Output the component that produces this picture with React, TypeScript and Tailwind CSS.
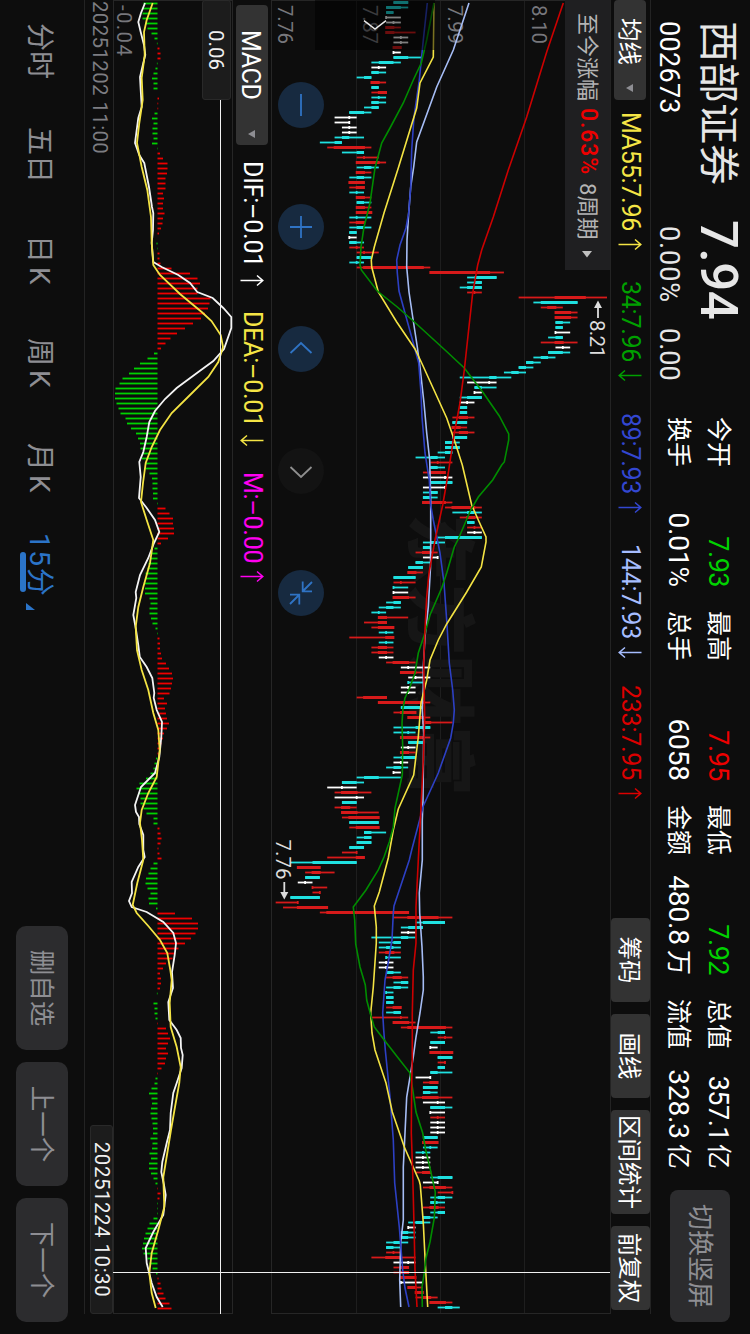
import type { ReactNode } from "react";

type Point = [time: number, level: number];

const STEP = 5;
const MAIN_TOP = 610;
const MACD_TOP = 232;
const MACD_ZERO = 157.5;

// colour, then low, body low, body high, high, in cents above 7.76
const CANDLES = `
c16,16,18,18 c15,15,17,18 c15,15,16,16 w15,15,15,17 w15,16,16,17 r15,15,16,17 r15,15,16,19 w16,17,17,18 w16,17,17,18 r16,16,17,17
w16,16,16,17 c16,16,18,20 c13,14,16,17 w13,14,14,15 c13,13,14,15 c11,12,13,13 r13,13,14,15 c13,13,14,14 r13,14,15,15 c13,14,14,15
c13,13,14,15 c12,13,14,14 c10,10,12,13 w8,10,10,11 w8,10,10,10 w9,10,10,11 w9,10,10,11 c8,9,10,12 c6,8,9,9 r7,8,12,13
c9,11,12,12 r11,12,12,14 r11,11,14,15 c11,12,13,14 r11,11,12,13 c10,11,12,13 r10,10,12,12 r10,11,12,12 c10,11,11,12 r11,11,12,13
c11,11,12,13 r11,11,12,13 r11,11,13,13 c10,11,11,13 r10,11,12,12 c10,11,12,13 c10,10,11,11 w10,10,10,11 c10,10,11,12 r10,11,11,12
r11,12,12,14 c11,11,13,13 c10,11,11,12 r11,12,20,21 r21,21,29,31 c26,27,30,30 c26,27,28,28 c25,26,28,28 r26,27,27,28 r33,38,42,45
c35,36,41,41 r36,37,38,39 r38,38,40,41 r38,38,40,41 c38,38,39,40 c38,38,39,39 w38,38,38,40 c37,38,39,39 r36,38,39,41 w38,39,39,40
c37,37,39,40 c35,36,37,38 c34,34,35,36 c33,33,34,35 c31,32,33,34 c25,29,30,32 w26,29,29,30 c27,27,28,30 w27,27,27,28 c25,26,28,28
w25,26,26,27 c25,25,26,26 c25,25,26,26 r24,25,26,27 c24,24,26,26 r24,24,25,26 r24,25,26,27 c24,24,26,26 c23,23,24,25 c23,23,25,25
c22,23,24,24 c19,21,22,23 r21,22,22,24 c21,21,22,23 r20,21,23,23 w20,23,23,24 c21,21,24,24 w20,23,23,23 c20,21,22,22 c20,20,21,22
r20,20,23,24 r23,24,27,28 c24,26,27,28 r25,26,27,28 c26,26,27,27 r26,27,27,28 w26,27,27,28 c22,23,28,28 c20,21,22,23 c20,20,21,21
r19,20,21,22 w20,22,22,22 c19,19,20,21 c18,18,20,20 r18,18,19,20 c16,16,19,19 r16,17,17,19 c16,16,16,18 w16,16,16,18 r16,16,18,19
c15,16,17,17 c14,15,16,17 c13,14,14,15 r14,14,15,18 r12,14,15,15 r13,14,16,16 c14,15,15,16 r10,15,16,16 c14,15,15,16 r13,14,15,16
r13,14,15,16 w14,15,15,16 r15,16,18,19 w17,18,18,21 r17,17,19,20 w18,19,19,21 c18,18,18,20 w17,18,18,19 w17,18,18,19 r11,12,15,15
r14,14,20,21 c17,17,20,20 r16,17,19,19 r18,18,20,21 r20,20,21,24 c16,19,21,21 c16,18,18,19 r17,17,20,21 c18,18,20,20 w17,18,18,19
r17,17,18,19 c16,17,19,19 w16,17,17,18 c15,16,17,18 w16,16,16,17 c11,12,14,17 c9,9,11,12 w7,9,9,11 r8,9,11,13 w8,11,11,12
c9,9,11,11 r8,9,10,11 r9,9,11,14 r9,10,14,14 c10,10,14,14 r10,11,14,14 c12,12,13,15 c11,12,13,13 c11,11,13,13 c10,10,12,12
r9,11,11,11 r7,11,12,12 c2,5,11,11 r3,3,6,6 r4,5,6,8 c4,4,6,6 w3,4,4,5 r5,5,5,7 r5,6,6,6 c2,2,6,6
r0,3,3,3 r1,3,7,7 r6,7,18,18 r16,18,22,24 c19,20,23,23 c17,18,20,20 w17,18,18,19 c13,17,18,19 c14,16,17,17 c14,15,16,17
r14,15,16,17 c15,15,15,17 w14,15,15,16 w14,15,15,16 c15,15,16,17 r15,16,17,18 c16,17,18,18 c15,16,17,18 c15,15,15,16 c15,15,16,16
c15,15,16,16 r15,16,17,17 c15,16,17,17 r13,17,17,18 r16,16,18,19 r17,18,23,24 c21,22,23,23 r22,23,23,24 c21,21,23,23 w21,21,21,22
r21,21,24,24 c22,22,24,24 r22,23,23,23 c22,22,23,23 c21,21,22,24 w19,21,21,21 r20,21,22,22 c20,20,22,22 c20,20,21,22 r19,20,22,24
w20,22,22,23 c21,21,23,24 w21,21,21,23 r21,22,22,23 w21,22,22,23 w21,22,22,23 w21,22,22,23 c20,20,22,22 r20,20,22,22 c20,21,21,22
c19,20,20,21 w19,20,20,21 w19,20,20,21 w19,20,20,21 r19,20,21,21 c21,22,24,24 w20,22,22,22 r20,21,23,24 r22,24,24,24 c21,22,23,24
c21,21,22,23 r20,21,22,23 c21,22,23,23 c20,20,21,22 c18,19,20,21 w18,18,18,19 c17,17,18,19 c17,17,18,19 c15,16,17,18 c15,15,16,17
r15,16,16,17 r13,15,17,19 w16,18,18,19 r16,17,18,18 r16,17,18,18 r17,17,19,19 w17,17,17,20 r18,18,19,20 r19,19,20,20 r19,20,21,22
r21,21,23,24 c22,23,24,25`
  .trim()
  .split(/\s+/)
  .map((token) => ({
    kind: token[0],
    prices: token.slice(1).split(",").map(Number),
  }));

const CANDLE_COLORS: Record<string, string> = {
  r: "#d71a1a",
  c: "#1fe0e0",
  w: "#ffffff",
};

const HISTOGRAM = [
  -14, -15, -15, -15, -12, -10, -6, -3, -0.6, 2, 3, 3, -0.6, -2, -4, -5.5, -4, -4, 0, 1.5, 0.7, 0.7, -3, -5.5, -4, -5, -5, -4, -5.5, -0.4,
  2.5, 5.5, 10, 10, 9.5, 8, 8, 8, 5.5, 6.5, 5.5, 5.5, 7, 5.5, 5, 3.5, 1.5, 0, -1, -0.4, 2, 2, 3, 14, 32.5, 40, 42.5, 40, 40, 53,
  52, 50.5, 47.5, 43.5, 35.5, 27.5, 19.5, 13, 8, 3.5, -3.5, -10, -17.5, -23.5, -28.5, -35, -38, -42, -42.5, -42.5, -41, -39, -37, -32, -30.5, -26.5, -21.5, -19.5, -17.5, -17,
  -15.5, -15.5, -12.5, -12, -8, -5.5, -5, -5, -4.5, -4.5, -0.5, 8, 12, 15.5, 15.5, 16.5, 16.5, 10.5, 3.5, -3, -5.5, -7, -9, -10, -12, -12, -12.5, -12.5, -12.5, -8,
  -7, -8, -8, -6.5, -5, -2, -0.5, 2, 2.5, 2.5, 3.5, 4.5, 8.5, 11.5, 14.5, 15.5, 14.5, 13.5, 12, 6.5, 9.5, 7.5, 8.5, 9.5, 11.5, 9.5, 6.5, 5.5, 4, 2.5,
  1, -1.5, -3, -4, -7, -11.5, -18, -21, -19, -17, -17, -14, -11, -4, -4, 2, 3, 4, 3, 1, 2, 4, -4, -7, -9, -11.5, -12, -10, -7, -9,
  -8.5, -1.5, 17.5, 34.5, 40.5, 40.5, 38, 33.5, 27.5, 21, 17, 15, 8.5, 5.5, 2.5, 3.5, 3.5, 2.5, -0.6, 0, -4, -3, -3, -2, 0.5, 8.5, 10.5, 12.5, 10.5, 8.5,
  10.5, 8.5, 7.5, 4, 0.5, -2, -3, -6, -8.5, -6, -5.5, -6.5, -7, -6, -5, -4.5, -4.5, -7, -5, -5.5, -8, -6.5, -8.5, -8.5, -6.5, -4, -2, 0.5, 3, 2,
  -0.5, -0.5, -0.5, -4, -8, -10, -12, -13.5, -14.5, -15.5, -14, -10, -8, -5, -1.5, 1, 3, 4, 6, 8, 12, 14,
];

const AVERAGES: { color: string; points: Point[] }[] = [
  {
    color: "#a6bdf5",
    points: [[3, 469], [50, 453.3], [87, 436.7], [142, 416.7], [167, 413.7], [187, 410.7], [213, 408.7], [240, 407], [267, 406.7], [292, 409], [317, 412.7], [347, 417.3], [367, 420], [403, 424], [433, 426.7], [460, 429.7], [500, 430.7], [540, 430.7], [567, 430.5], [607, 428.3], [637, 425], [667, 423.3], [687, 423.3], [710, 422.3], [733, 423.7], [800, 423], [820, 422.3], [860, 422.3], [893, 419.3], [913, 419.7], [947, 422], [977, 423.3], [990, 423.3], [1013, 420], [1037, 416], [1057, 413.3], [1097, 406.7], [1133, 405], [1167, 403.3], [1220, 403.3], [1243, 400.7], [1280, 399.7], [1307, 400.7]],
  },
  {
    color: "#2d40c4",
    points: [[3, 427.3], [40, 423.3], [80, 419.3], [117, 414], [150, 411.7], [187, 410.7], [213, 408.7], [228, 406], [245, 400], [260, 396.7], [273, 397.3], [291, 399], [313, 405], [343, 413.3], [363, 418.7], [393, 421], [417, 422], [453, 425], [480, 429.3], [505, 430.7], [520, 433.3], [553, 440], [583, 444], [620, 446.7], [663, 449.3], [690, 452.7], [710, 454.3], [723, 453.3], [738, 450.7], [773, 438.3], [806, 423.3], [850, 411.7], [860, 409.3], [906, 394], [913, 393.3], [940, 392], [962, 388.3], [980, 385], [1013, 382.7], [1030, 383.7], [1050, 385.3], [1097, 390], [1140, 393.3], [1183, 394.7], [1227, 399.3], [1270, 402.7], [1288, 405], [1307, 409]],
  },
  {
    color: "#f3e343",
    points: [[3, 434], [57, 433.3], [83, 420], [108, 416.7], [168, 398.3], [213, 384], [247, 374.3], [260, 371.3], [267, 371.7], [292, 378.3], [322, 396.7], [349, 415], [363, 421.7], [418, 446.7], [440, 454.3], [465, 462.3], [505, 471.7], [520, 478.3], [537, 486], [542, 486], [567, 481.3], [592, 466.7], [624, 446.7], [640, 438.3], [660, 430], [680, 426.7], [703, 421], [737, 418.3], [775, 413.7], [809, 398.3], [830, 393.3], [858, 388.3], [892, 379.3], [906, 374.3], [927, 376.3], [943, 376.3], [987, 373.3], [1013, 370.7], [1033, 372], [1050, 375], [1083, 386], [1112, 392.3], [1147, 404.3], [1181, 419.3], [1185, 420.3], [1223, 423.3], [1257, 425], [1307, 427.7]],
  },
  {
    color: "#008c00",
    points: [[3, 434], [40, 426.7], [63, 421.3], [80, 413.3], [103, 403.3], [128, 390], [143, 381.7], [168, 375], [203, 370], [227, 364], [247, 361], [265, 360], [270, 361.3], [291, 377.3], [307, 397.3], [321, 413.3], [350, 445], [368, 464.3], [392, 482.7], [416, 499.3], [434, 508.7], [440, 508.7], [462, 504.3], [465, 501.7], [480, 492.7], [497, 478.3], [510, 470.7], [539, 458.3], [547, 454.3], [573, 446.7], [588, 441.7], [615, 430], [633, 425], [653, 418.3], [673, 415], [687, 410], [698, 405], [708, 403], [723, 402], [747, 402.7], [775, 402.3], [808, 395], [827, 393.3], [842, 389.3], [857, 384], [870, 378.3], [890, 366], [907, 353.3], [920, 354.7], [944, 355.7], [967, 360], [985, 365.3], [1000, 366.7], [1015, 370.7], [1027, 374.3], [1041, 385], [1059, 399], [1073, 410], [1087, 412.3], [1112, 416], [1133, 422.7], [1150, 425.7], [1168, 430], [1192, 435.3], [1218, 434.3], [1242, 430], [1258, 426], [1273, 424.3], [1287, 422], [1307, 422.3]],
  },
  {
    color: "#cc0000",
    points: [[3, 563.3], [52, 546.7], [117, 526.7], [170, 508.3], [217, 493.3], [250, 481.7], [265, 477.7], [293, 472.7], [333, 468.3], [370, 464.3], [403, 460], [433, 454.3], [473, 448.3], [505, 442.7], [540, 435], [573, 429], [597, 426.7], [630, 425], [663, 423.7], [720, 424.7], [760, 423.3], [813, 420.7], [860, 418.3], [907, 416], [943, 416], [970, 413.3], [1013, 412.3], [1060, 412.3], [1083, 411.7], [1133, 411.3], [1173, 412.7], [1237, 414.3], [1270, 415], [1307, 417]],
  },
];

const DIF: Point[] = [[3, 145], [13, 141], [22, 138.3], [32, 140.7], [45, 144], [55, 145.3], [63, 143.3], [77, 140], [90, 140.7], [107, 141.7], [118, 138.3], [133, 136.3], [143, 135], [155, 139.3], [163, 144.3], [187, 149], [207, 152], [213, 153.3], [230, 153], [243, 151.7], [262, 153.3], [267, 161.7], [275, 178.3], [283, 190], [292, 197.3], [298, 212.7], [308, 223.3], [317, 231.3], [328, 231.3], [349, 224], [361, 213.3], [372, 198.3], [388, 176.7], [399, 165], [411, 155], [422, 149.3], [437, 146.7], [452, 143.3], [462, 139.3], [477, 140.7], [498, 139], [508, 146.7], [520, 155], [532, 159.3], [543, 154], [558, 148.3], [575, 140], [592, 135.7], [598, 136.3], [615, 133.3], [628, 135.7], [645, 138.3], [657, 139.8], [667, 146.7], [678, 152.3], [693, 154.3], [698, 153.7], [710, 156.7], [722, 162], [737, 161.3], [757, 159.3], [773, 155], [787, 141], [805, 135], [812, 136], [817, 139], [824, 139.3], [835, 143.3], [850, 143.3], [857, 144.7], [867, 138.3], [882, 131.7], [893, 132], [901, 129], [907, 131.7], [912, 146.7], [922, 163.3], [933, 173.3], [943, 176], [955, 174.7], [972, 172], [988, 173], [1002, 168.3], [1020, 169.3], [1030, 176.7], [1038, 180.7], [1048, 181], [1055, 182.7], [1068, 181.7], [1083, 176.7], [1093, 173.3], [1113, 170.7], [1130, 170], [1143, 166.7], [1162, 162.3], [1172, 161.3], [1185, 164], [1195, 165.7], [1215, 163.3], [1232, 153.3], [1248, 145.7], [1263, 146.7], [1283, 151.7], [1297, 156.7], [1307, 162.7]];

const DEA: Point[] = [[3, 152.7], [20, 146.7], [32, 144], [55, 144.7], [78, 141.7], [100, 142.7], [123, 139.3], [143, 137], [167, 141.7], [190, 147.3], [217, 151], [243, 151.7], [265, 153.3], [275, 160], [294, 180], [312, 201.7], [321, 211.5], [335, 220.7], [347, 223], [362, 218.3], [377, 208.3], [395, 190], [413, 171.7], [430, 160], [447, 151.7], [463, 145.7], [483, 143], [502, 141], [520, 146.7], [540, 153.3], [563, 150], [587, 143.3], [607, 138.3], [627, 135.7], [650, 137], [670, 141.7], [690, 148.3], [713, 153.3], [730, 158.3], [750, 159.7], [777, 156.7], [793, 148.3], [810, 141.7], [823, 140], [840, 142], [860, 143.3], [883, 137.3], [905, 132.7], [913, 136.7], [926, 148.3], [940, 160], [953, 167.3], [970, 170.3], [980, 171.7], [1003, 169.7], [1027, 170.7], [1047, 176.7], [1067, 180.7], [1083, 179.3], [1107, 175], [1130, 171], [1153, 167.3], [1177, 163.3], [1207, 164.3], [1230, 158.3], [1253, 151.7], [1273, 149.3], [1293, 151.7], [1308, 155.7]];

const STATS = [
  { x: "今开", y: "7.93", color: "text-[#00d200]", x2: "换手", y2: "0.01%" },
  { x: "最高", y: "7.95", color: "text-[#ee0000]", x2: "总手", y2: "6058" },
  { x: "最低", y: "7.92", color: "text-[#00d200]", x2: "金额", y2: "480.8", unit2: "万" },
  { x: "总值", y: "357.1", unit: "亿", color: "text-white", x2: "流值", y2: "328.3", unit2: "亿" },
];

const MA_LABELS = [
  { text: "MA55:7.96", up: true, className: "w-[169px] text-[#f5e545]" },
  { text: "34:7.96", up: false, className: "w-[132px] text-[#00a000]" },
  { text: "89:7.93", up: true, className: "w-[131px] text-[#3347d1]" },
  { text: "144:7.93", up: false, className: "w-[141px] text-[#a6bdff]" },
  { text: "233:7.95", up: true, className: "w-[140px] text-[#dc0000]" },
];

const MACD_LABELS = [
  { text: "DIF:–0.01", up: true, className: "w-[150px] text-white" },
  { text: "DEA:–0.01", up: false, className: "w-[161px] text-[#f5e545]" },
  { text: "M:–0.00", up: true, className: "w-[140px] text-[#ff00f0]" },
];

const TOOLS = [
  { text: "筹码", className: "w-[84px]" },
  { text: "画线", className: "w-[84px]" },
  { text: "区间统计", className: "w-[104px]" },
  { text: "前复权", className: "w-[84px]" },
];

const PERIODS = [
  { text: "分时", className: "w-[104px]" },
  { text: "五日", className: "w-[108px]" },
  { text: "日", unit: "K", className: "w-[103px]" },
  { text: "周", unit: "K", className: "w-[105px]" },
  { text: "月", unit: "K", className: "w-[90px]" },
];

const toPoints = (points: Point[], top: number) =>
  points.map(([time, level]) => `${time},${top - level}`).join(" ");

const priceY = (cents: number) => MAIN_TOP - (275.67 + cents * 7.363);

function Trend({ up }: { up: boolean }) {
  return (
    <svg
      className={up ? "ml-[7px] h-[24px] w-[13px]" : "ml-[7px] h-[24px] w-[13px] rotate-180"}
      viewBox="0 0 13 24"
      fill="none"
      stroke="currentColor"
      strokeWidth="1.5"
    >
      <path d="M6.5 23.5V1.5M1.5 7L6.5 1.2L11.5 7" />
    </svg>
  );
}

function Indicator({ text, up, className }: { text: string; up: boolean; className: string }) {
  return (
    <div className={`flex items-center whitespace-nowrap text-[25px] ${className}`}>
      <span className="tracking-[-0.25px]">{text}</span>
      <Trend up={up} />
    </div>
  );
}

function Caret({ className }: { className: string }) {
  return (
    <svg className={className} viewBox="0 0 8 7">
      <path d="M0 0H8L4 7Z" fill="#8e8e93" />
    </svg>
  );
}

function RoundButton({ dim = false, children }: { dim?: boolean; children: ReactNode }) {
  return (
    <div
      className={`size-[46px] rounded-full ${dim ? "bg-[#131313] text-[#8f8f8f]" : "bg-[#172a40] text-[#2f73c4]"}`}
    >
      <svg className="size-[46px]" viewBox="0 0 46 46" fill="none" stroke="currentColor" strokeWidth="1.8">
        {children}
      </svg>
    </div>
  );
}

function Header() {
  return (
    <header className="flex h-[100px] w-[1334px] pr-[12px]">
      <div className="w-[417px] shrink-0 pl-[21px] pt-[2px] text-[#e6e6e6]">
        <div className="flex h-[58px] items-center whitespace-nowrap">
          <span className="w-[199px] pt-[4px] text-[41px]">西部证券</span>
          <span className="text-[51px] font-medium leading-none tracking-[-0.5px]">7.94</span>
        </div>
        <div className="flex h-[42px] items-center text-[27px]">
          <span className="w-[205px] tracking-[0.3px] text-white">002673</span>
          <span className="w-[102px] tracking-[0.9px]">0.00%</span>
          <span>0.00</span>
        </div>
      </div>
      <div className="flex shrink-0 gap-6">
        {STATS.map((stat) => (
          <div key={stat.x} className="flex w-[170px] flex-col pt-[12px] text-[25px] text-white">
            <div className="flex h-[40px] items-center">
              <span className="mr-auto">{stat.x}</span>
              <span className={`text-[27px] tracking-[-0.5px] ${stat.color}`}>{stat.y}</span>
              {stat.unit && <span className="ml-[3px]">{stat.unit}</span>}
            </div>
            <div className="flex h-[40px] items-center">
              <span className="mr-auto">{stat.x2}</span>
              <span className="text-[28px] leading-[40px] tracking-[-0.1px]">{stat.y2}</span>
              {stat.unit2 && <span className="ml-[5px]">{stat.unit2}</span>}
            </div>
          </div>
        ))}
      </div>
      <button className="ml-[21px] mt-[20px] h-[60px] w-[132px] shrink-0 rounded-[8px] bg-[#2c2c2e] text-[26px] text-[#8e8e93]">
        切换竖屏
      </button>
    </header>
  );
}

function AverageBar() {
  return (
    <div className="-mt-px flex h-[41px] w-[1314px] border-y border-[#232323]">
      <div className="mt-[4px] flex h-[32px] w-[100px] items-center rounded-[4px] bg-[#333333] pl-[18px] text-[23.5px] text-white">
        <span className="pt-[3px]">均线</span>
        <Caret className="ml-[19px] h-[7px] w-[8px]" />
      </div>
      <div className="ml-[12px] flex">
        {MA_LABELS.map((label) => (
          <Indicator key={label.text} {...label} />
        ))}
      </div>
      <div className="ml-[93px] flex gap-3">
        {TOOLS.map((tool) => (
          <button
            key={tool.text}
            className={`h-[39px] whitespace-nowrap rounded-[4px] bg-[#333333] pt-[4px] text-[23.5px] text-white ${tool.className}`}
          >
            {tool.text}
          </button>
        ))}
      </div>
    </div>
  );
}

function PriceChart() {
  return (
    <section className="relative h-[339px] w-[1334px]">
      <svg className="block h-[339px] w-[1334px]" viewBox="0 0 1334 339">
        <g stroke="#1e1e1e">
          <path d="M0 85.5H1314M0 169.5H1314M0 253.5H1314" />
          <path d="M0 338.5H1314M0.5 0V339M1313.5 0V339" stroke="#262626" />
        </g>
        <text x="514" y="196" fontSize="70" fontWeight="900" fill="#161616" textLength="282">
          东方财富
        </text>
        <g fontSize="20.5" fill="#77777c">
          <text x="5" y="78.5" textLength="39">8.10</text>
          <text x="5" y="162.5" textLength="39">7.99</text>
          <text x="5" y="247" textLength="39">7.87</text>
          <text x="5" y="332.5" textLength="39">7.76</text>
        </g>
        {CANDLES.map(({ kind, prices }, i) => {
          const [low, bodyLow, bodyHigh, high] = prices;
          const x = i * STEP + 2;
          const pad = kind === "r" ? 0.9 : bodyLow === bodyHigh ? 0.9 : 0;
          const top = priceY(bodyHigh) - pad;
          return (
            <g key={i} fill={CANDLE_COLORS[kind]}>
              <rect x={x - 0.4} y={priceY(high)} width="1.8" height={priceY(low) - priceY(high)} />
              <rect x={x - 1} y={top} width="3" height={priceY(bodyLow) + pad - top} />
            </g>
          );
        })}
        {AVERAGES.map(({ color, points }) => (
          <polyline key={color} points={toPoints(points, MAIN_TOP)} fill="none" stroke={color} strokeWidth="1.6" />
        ))}
        <g fill="#dddddd" stroke="#dddddd">
          <path d="M306 12H318" strokeWidth="1.8" />
          <path d="M300.5 12L308 8V16Z" stroke="none" />
          <text x="320" y="20" fontSize="20.5" stroke="none" textLength="38">8.21</text>
          <path d="M882 325.7H893" strokeWidth="1.8" />
          <path d="M899.5 325.7L892 321.7V329.7Z" stroke="none" />
          <text x="839.5" y="334" fontSize="20.5" stroke="none" textLength="40">7.76</text>
        </g>
        <path d="M1272.5 0V339" stroke="#f0f0f0" />
      </svg>
      <div className="absolute left-0 top-0 flex h-[45px] w-[270px] items-center whitespace-nowrap bg-[#1f1f21] pl-[13px] text-[22px] text-[#b4b4b4]">
        至今涨幅
        <span className="ml-[7px] w-[75px] text-[23px] font-medium tracking-[0.9px] text-[#ee0000]">0.63%</span>
        8周期
        <svg className="ml-[12px] h-[10px] w-[7px]" viewBox="0 0 7 10">
          <path d="M0 0L6.5 5L0 10Z" fill="#c0c0c0" />
        </svg>
      </div>
      <div className="absolute left-0 top-[175px] h-[120px] w-[50px] bg-black/50">
        <svg className="h-[120px] w-[50px]" viewBox="0 0 50 120" fill="none" stroke="#e8e8e8" strokeWidth="1.5">
          <path d="M20.7 49L29 60L20.7 71" />
        </svg>
      </div>
      <div className="absolute left-[81.5px] top-[286px] flex gap-[76px]">
        <RoundButton>
          <path d="M12 23H34" />
        </RoundButton>
        <RoundButton>
          <path d="M12 23H34M23 12V34" />
        </RoundButton>
        <RoundButton>
          <path d="M27 12.5L17 23L27 33.5" />
        </RoundButton>
        <RoundButton dim>
          <path d="M19 12.5L29 23L19 33.5" />
        </RoundButton>
        <RoundButton>
          <path d="M12 12L21 21M11.5 21.3H21.3V12M34 34L25 25M34.5 24.7H24.7V34" />
        </RoundButton>
      </div>
    </section>
  );
}

function MacdBar() {
  return (
    <div className="relative flex h-[38px] items-center pl-[5px]">
      <div className="flex h-[32px] w-[140px] items-center rounded-[4px] bg-[#333333] pl-[25px] text-[25px] text-white">
        <span className="w-[69px] pt-[3px] tracking-[-0.3px]">MACD</span>
        <Caret className="ml-[31px] h-[7px] w-[8px]" />
      </div>
      <div className="ml-[16px] flex">
        {MACD_LABELS.map((label) => (
          <Indicator key={label.text} {...label} />
        ))}
      </div>
      <div className="absolute left-[1272px] top-0 h-[38px] w-px bg-[#f0f0f0]" />
    </div>
  );
}

function MacdChart() {
  const zero = MACD_TOP + 1 - MACD_ZERO;
  return (
    <section className="relative h-[120px] w-[1334px]">
      <svg className="block h-[120px] w-[1334px]" viewBox="0 0 1334 120">
        <path d="M0 0.5H1314M0 119.5H1314M0.5 0V120M1313.5 0V120" stroke="#262626" />
        <text x="5" y="116" fontSize="20.5" fill="#77777c" textLength="51">-0.04</text>
        {HISTOGRAM.map((value, i) => (
          <rect
            key={i}
            x={i * STEP + 2.6}
            y={value > 0 ? zero - value : zero}
            width="1.8"
            height={Math.abs(value)}
            fill={value > 0 ? "#ee0000" : "#00d200"}
          />
        ))}
        <polyline points={toPoints(DIF, MACD_TOP + 1)} fill="none" stroke="#f4f4f4" strokeWidth="1.8" />
        <polyline points={toPoints(DEA, MACD_TOP + 1)} fill="none" stroke="#f3e343" strokeWidth="1.8" />
        <path d="M100 12.5H1314M1272.5 0V120" stroke="#f0f0f0" />
      </svg>
      <div className="absolute left-0 top-[2px] flex h-[29px] w-[100px] items-center justify-center rounded-[3px] border border-[#292929] bg-[#1c1c1c] pt-[2px] text-[20.5px] text-[#f0f0f0]">
        0.06
      </div>
    </section>
  );
}

function DateBar() {
  return (
    <div className="flex h-[29px] w-[1314px] items-start justify-between border-b border-[#232323] text-[20.5px]">
      <span className="pl-px leading-[27px] tracking-[0.35px] text-[#7d7d82]">20251202 11:00</span>
      <span className="flex h-[23px] w-[189px] items-center justify-center rounded-[3px] border border-[#292929] bg-[#1c1c1c] tracking-[0.5px] text-[#f0f0f0]">
        20251224 10:30
      </span>
    </div>
  );
}

function PeriodBar() {
  return (
    <footer className="flex h-[84px] pl-[23px] text-[28px] text-[#8e8e93]">
      <nav className="flex w-[903px] items-center pt-[5px]">
        {PERIODS.map((period) => (
          <span key={period.text} className={period.className}>
            {period.text}
            {period.unit && <span className="ml-[4px]">{period.unit}</span>}
          </span>
        ))}
        <span className="relative flex items-center text-[#2b74c8]">
          <span className="w-[65px] tracking-[1.6px]">15分</span>
          <span className="absolute bottom-[2px] left-[19px] h-[6px] w-[40px] rounded-full bg-[#2b74c8]" />
          <svg className="ml-[5px] mt-[17px] h-[9px] w-[7px]" viewBox="0 0 7 9">
            <path d="M0 9H7V0Z" fill="#2b74c8" />
          </svg>
        </span>
      </nav>
      <div className="flex gap-3 pt-[16px]">
        {["删自选", "上一个", "下一个"].map((text) => (
          <button key={text} className="h-[52px] w-[124px] rounded-[10px] bg-[#2c2c2e] text-[25.5px]">
            {text}
          </button>
        ))}
      </div>
    </footer>
  );
}

export default function App() {
  return (
    <div className="h-[1334px] w-[750px] overflow-hidden bg-[#0d0d0d]">
      {/* the whole screen is laid out in landscape and turned clockwise */}
      <div className="h-[750px] w-[1334px] origin-top-left translate-x-[750px] rotate-90 font-['Roboto','Noto_Sans_CJK_SC',sans-serif]">
        <Header />
        <AverageBar />
        <PriceChart />
        <MacdBar />
        <MacdChart />
        <DateBar />
        <PeriodBar />
      </div>
    </div>
  );
}
